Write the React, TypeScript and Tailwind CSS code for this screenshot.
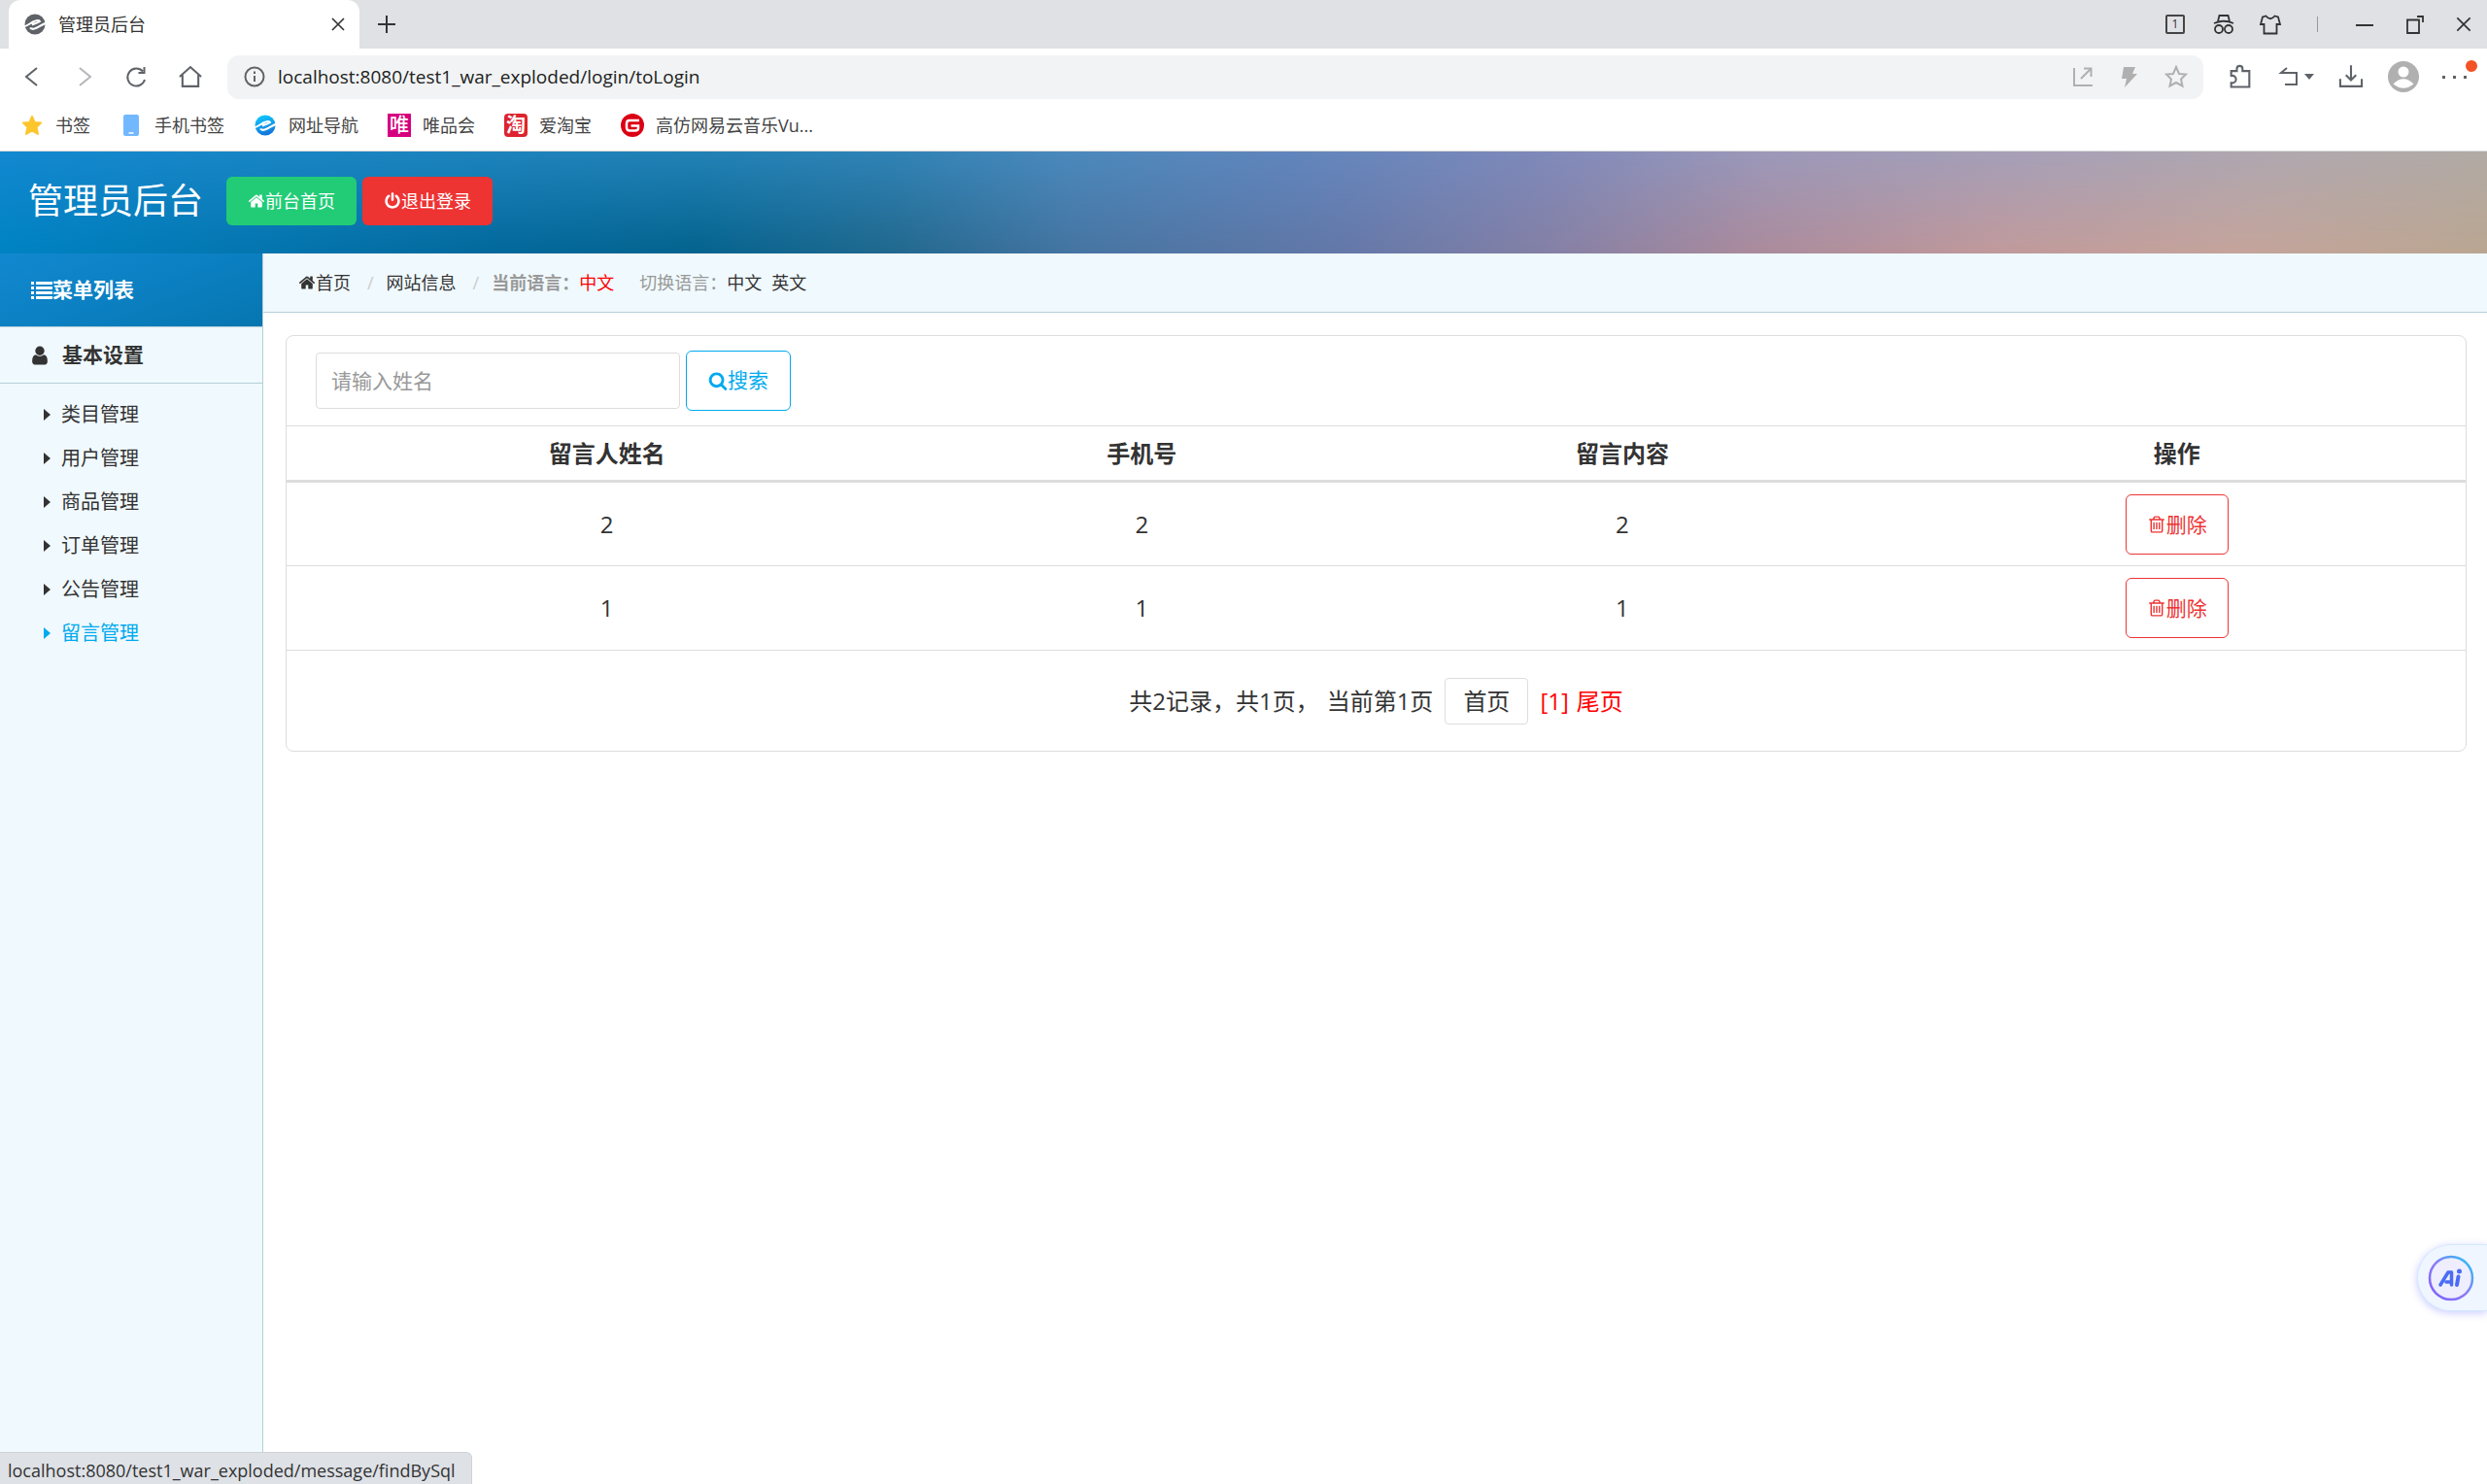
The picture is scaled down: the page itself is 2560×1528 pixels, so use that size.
import { useState } from "react";
import type { ReactNode } from "react";

const FA = {
  home: "M1472 992v480q0 26-19 45t-45 19h-384v-384h-256v384h-384q-26 0-45-19t-19-45v-480q0-1 .5-3t.5-3l575-474 575 474q1 2 1 6zm223-69l-62 74q-8 9-21 11h-3q-13 0-21-7l-692-577-692 577q-12 8-24 7-13-2-21-11l-62-74q-8-10-7-23.5t11-21.5l719-599q32-26 76-26t76 26l244 204v-195q0-14 9-23t23-9h192q14 0 23 9t9 23v408l219 182q10 8 11 21.5t-7 23.5z",
  power:
    "M1664 896q0 156-61 298t-164 245-245 164-298 61-298-61-245-164-164-245-61-298q0-182 80.5-343t226.5-270q43-32 95.5-25t83.5 50q32 42 24.5 94.5t-49.5 84.5q-98 74-151.5 181t-53.5 228q0 104 40.5 198.5t109.5 163.5 163.5 109.5 198.5 40.5 198.5-40.5 163.5-109.5 109.5-163.5 40.5-198.5q0-121-53.5-228t-151.5-181q-42-32-49.5-84.5t24.5-94.5q31-43 84-50t95 25q146 109 226.5 270t80.5 343zm-640-768v640q0 52-38 90t-90 38-90-38-38-90v-640q0-52 38-90t90-38 90 38 38 90z",
  search:
    "M1216 832q0-185-131.5-316.5t-316.5-131.5-316.5 131.5-131.5 316.5 131.5 316.5 316.5 131.5 316.5-131.5 131.5-316.5zm512 832q0 52-38 90t-90 38q-54 0-90-38l-343-342q-179 124-399 124-143 0-273.5-55.5t-225-150-150-225-55.5-273.5 55.5-273.5 150-225 225-150 273.5-55.5 273.5 55.5 225 150 150 225 55.5 273.5q0 220-124 399l343 343q37 37 37 90z",
  trash:
    "M704 736v576q0 14-9 23t-23 9h-64q-14 0-23-9t-9-23v-576q0-14 9-23t23-9h64q14 0 23 9t9 23zm256 0v576q0 14-9 23t-23 9h-64q-14 0-23-9t-9-23v-576q0-14 9-23t23-9h64q14 0 23 9t9 23zm256 0v576q0 14-9 23t-23 9h-64q-14 0-23-9t-9-23v-576q0-14 9-23t23-9h64q14 0 23 9t9 23zm128 724v-948h-896v948q0 22 7 40.5t14.5 27 10.5 8.5h832q3 0 10.5-8.5t14.5-27 7-40.5zm-672-1076h448l-48-117q-7-9-17-11h-317q-10 2-17 11zm928 32v64q0 14-9 23t-23 9h-96v948q0 83-47 143.5t-113 60.5h-832q-66 0-113-58.5t-47-141.5v-952h-96q-14 0-23-9t-9-23v-64q0-14 9-23t23-9h309l70-167q15-37 54-63t79-26h320q40 0 79 26t54 63l70 167h309q14 0 23 9t9 23z",
  user: "M1536 1399q0 109-62.5 187t-150.5 78h-854q-88 0-150.5-78t-62.5-187q0-85 8.5-160.5t31.5-152 58.5-131 94-89 134.5-34.5q131 128 313 128t313-128q76 0 134.5 34.5t94 89 58.5 131 31.5 152 8.5 160.5zm-256-887q0 159-112.5 271.5t-271.5 112.5-271.5-112.5-112.5-271.5 112.5-271.5 271.5-112.5 271.5 112.5 112.5 271.5z",
};

function FaIcon({ d, className, viewBox = "0 0 1792 1792" }: { d: string; className: string; viewBox?: string }) {
  return (
    <svg viewBox={viewBox} className={`shrink-0 ${className}`} fill="currentColor" aria-hidden="true">
      <path d={d} />
    </svg>
  );
}

function LineIcon({ children, className = "size-6" }: { children: ReactNode; className?: string }) {
  return (
    <svg viewBox="0 0 24 24" className={`shrink-0 ${className}`} fill="none" stroke="currentColor" strokeWidth="2" aria-hidden="true">
      {children}
    </svg>
  );
}

function BrowserLogo({ id, from, to }: { id: string; from: string; to: string }) {
  return (
    <svg viewBox="0 0 24 24" className="size-6 shrink-0" aria-hidden="true">
      <defs>
        <linearGradient id={id} x1="0" y1="0" x2="0.3" y2="1">
          <stop offset="0" stopColor={from} />
          <stop offset="1" stopColor={to} />
        </linearGradient>
      </defs>
      <circle cx="12" cy="12" r="10.5" fill={`url(#${id})`} />
      <path d="M0 14.5C4 14 7 11 10 9.5C13 8 16 7.5 17 9C15 10.500 12 11 9 12.500" fill="none" stroke="white" strokeWidth="2" />
      <path d="M24 10.500C20 11.500 17 14 14 15.500C11 17 8 17 7 15.500" fill="none" stroke="white" strokeWidth="2.2" />
    </svg>
  );
}

function TabStrip() {
  return (
    <div className="flex h-[50px] items-center bg-[#dfe1e5] pl-[9px] text-[#333]">
      <div className="flex h-full w-[361px] items-center rounded-t-xl bg-white pr-[14px] pl-[15px]">
        <BrowserLogo id="tab-logo" from="#5f6368" to="#5f6368" />
        <span className="ml-3 grow text-lg">管理员后台</span>
        <button aria-label="关闭标签页">
          <LineIcon className="size-4">
            <path d="M3 3L21 21M21 3L3 21" strokeWidth="2.500" />
          </LineIcon>
        </button>
      </div>
      <button aria-label="新标签页" className="ml-4">
        <LineIcon>
          <path d="M12 3V21M3 12H21" />
        </LineIcon>
      </button>
      <div className="ml-auto flex items-center pr-[14px]">
        <button aria-label="标签数" className="flex size-5 items-center justify-center rounded-xs border-2 border-[#444] text-xs">
          1
        </button>
        <button aria-label="无痕模式" className="ml-7">
          <LineIcon className="size-6">
            <path d="M2 11Q12 6.500 22 11M6 9L7.500 3H16.500L18 9" strokeWidth="1.800" />
            <circle cx="7" cy="17" r="4" strokeWidth="1.800" />
            <circle cx="17" cy="17" r="4" strokeWidth="1.800" />
          </LineIcon>
        </button>
        <button aria-label="皮肤" className="ml-6">
          <LineIcon className="size-6">
            <path d="M7.500 3.500Q12 9 16.500 3.500L20 4.500L22 12H18.500V21.500H5.500V12H2L4 4.500Z" strokeWidth="1.800" />
          </LineIcon>
        </button>
        <span className="mx-9 h-4 w-px bg-[#999]" />
        <button aria-label="最小化">
          <LineIcon>
            <path d="M3 13H21" />
          </LineIcon>
        </button>
        <button aria-label="还原" className="ml-7">
          <LineIcon>
            <path d="M4 7.500H16V21H4ZM14 4H20V10" strokeWidth="1.800" />
          </LineIcon>
        </button>
        <button aria-label="关闭" className="ml-7">
          <LineIcon className="size-5">
            <path d="M4 4L20 20M20 4L4 20" />
          </LineIcon>
        </button>
      </div>
    </div>
  );
}

function AddressBar() {
  return (
    <div className="flex h-[58px] items-center bg-white pr-[10px] pl-5 text-[#5f6368]">
      <button aria-label="后退">
        <LineIcon>
          <path d="M18 3L7 12L18 21" />
        </LineIcon>
      </button>
      <button aria-label="前进" className="ml-8 text-[#b4b6b9]">
        <LineIcon>
          <path d="M6 3L17 12L6 21" />
        </LineIcon>
      </button>
      <button aria-label="刷新" className="ml-7">
        <LineIcon>
          <path d="M21 15A9 9 0 1 1 19 6.500M20.500 2V8H14.500" />
        </LineIcon>
      </button>
      <button aria-label="主页" className="ml-[30px]">
        <LineIcon className="size-7">
          <path d="M2.500 12L12 3.500L21.500 12M5 10.500V20.500H19V10.500" strokeWidth="1.800" />
        </LineIcon>
      </button>
      <div className="ml-6 flex h-[45px] grow items-center rounded-xl bg-[#f1f3f4] px-4">
        <LineIcon>
          <circle cx="12" cy="12" r="9.500" />
          <path d="M12 11V17M12 6.500V9" />
        </LineIcon>
        <input
          aria-label="地址栏"
          defaultValue="localhost:8080/test1_war_exploded/login/toLogin"
          className="ml-3 grow bg-transparent text-[19px] text-[#222] outline-none"
        />
        <div className="flex items-center gap-6 text-[#b0b0b0]">
          <button aria-label="分享">
            <LineIcon>
              <path d="M3 3V21H22M10 14L20 4M13 3.500H20.500V12" />
            </LineIcon>
          </button>
          <button aria-label="极速模式">
            <LineIcon>
              <path d="M6 2H18L15 9H20L7 23L9 14H4Z" fill="currentColor" stroke="none" />
            </LineIcon>
          </button>
          <button aria-label="收藏">
            <LineIcon>
              <path d="M12 2L15 9L22 9.500L17 14.500L18.500 21.500L12 18L5.500 21.500L7 14.500L2 9.500L9 9Z" />
            </LineIcon>
          </button>
        </div>
      </div>
      <button aria-label="扩展" className="ml-6">
        <LineIcon className="size-7">
          <path d="M4 7H9V5A2.500 2.500 0 0 1 14 5V7H20V21H4V17.500H5A3 3 0 0 0 5 11H4Z" strokeWidth="1.800" />
        </LineIcon>
      </button>
      <button aria-label="恢复" className="ml-6 flex items-center">
        <LineIcon>
          <path d="M10 3L4 8H20V20H8" />
        </LineIcon>
        <span className="ml-1 border-x-5 border-t-6 border-x-transparent border-t-[#5f6368]" />
      </button>
      <button aria-label="下载" className="ml-6">
        <LineIcon className="size-7">
          <path d="M12 2V15M7.500 10.500L12 15L16.500 10.500M2.500 14V20.500H21.500V14" strokeWidth="1.800" />
        </LineIcon>
      </button>
      <button aria-label="账户" className="ml-6">
        <svg viewBox="0 0 32 32" className="size-8">
          <circle cx="16" cy="16" r="16" fill="#b0b0b0" />
          <circle cx="16" cy="11" r="5.500" fill="white" />
          <path d="M5.500 23.500Q16 13 26.500 23.500Q16 32 5.500 23.500Z" fill="white" />
        </svg>
      </button>
      <button aria-label="更多" className="relative ml-6 flex w-9 items-center gap-2 py-3">
        <span className="size-[3px] bg-[#5f6368]" />
        <span className="size-[3px] bg-[#5f6368]" />
        <span className="size-[3px] bg-[#5f6368]" />
        <span className="absolute -top-1 right-0 size-3 rounded-full bg-[#f35325]" />
      </button>
    </div>
  );
}

function Bookmark({ icon, label }: { icon: ReactNode; label: string }) {
  return (
    <a href="#" className="flex items-center gap-3">
      {icon}
      {label}
    </a>
  );
}

function Bookmarks() {
  return (
    <nav className="flex h-12 items-center gap-[30px] border-b border-[#dadada] bg-white pb-[6px] pl-[21px] text-lg text-[#444]">
      <Bookmark
        label="书签"
        icon={
          <svg viewBox="0 0 24 24" className="size-6">
            <path d="M12 3L14.500 9L21 9.500L16.500 14L18 21L12 17.500L6 21L7.500 14L3 9.500L9.500 9Z" fill="#fdc62d" stroke="#fdc62d" strokeWidth="2" strokeLinejoin="round" />
          </svg>
        }
      />
      <Bookmark
        label="手机书签"
        icon={
          <svg viewBox="0 0 24 24" className="size-6">
            <rect x="4" y="1" width="16" height="22" rx="2" fill="#72b8ff" />
            <path d="M9.500 20H14.500" stroke="white" strokeWidth="1.500" />
          </svg>
        }
      />
      <Bookmark label="网址导航" icon={<BrowserLogo id="nav-logo" from="#10d0ff" to="#1478dc" />} />
      <Bookmark
        label="唯品会"
        icon={<span className="flex size-6 items-center justify-center bg-[#d6007f] text-xl font-medium text-white">唯</span>}
      />
      <Bookmark
        label="爱淘宝"
        icon={<span className="flex size-6 items-center justify-center rounded-sm bg-[#dc2430] text-xl font-bold text-white">淘</span>}
      />
      <Bookmark
        label="高仿网易云音乐Vu..."
        icon={
          <svg viewBox="0 0 24 24" className="size-6">
            <circle cx="12" cy="12" r="12" fill="#dc0014" />
            <path d="M19 7H9Q6 7 6 10V14Q6 17.500 9 17.500H15Q18 17.500 18 15V12.500H10.500" fill="none" stroke="white" strokeWidth="2.500" />
          </svg>
        }
      />
    </nav>
  );
}

function Banner() {
  return (
    <header className="relative isolate flex h-[105px] items-center pb-[3px] pl-[29px] text-white">
      {/* upper tones, with the darker lower tones faded in over them */}
      <div className="absolute inset-0 -z-20 bg-[linear-gradient(90deg,#1288d0_0%,#1a84c0_14%,#2180b4_28%,#3082b4_36%,#4b88bb_43%,#6185bc_52%,#7f89b9_62%,#9d98b8_71%,#a8a0b6_82%,#b1a8ae_92%,#b2aaa4_100%)]" />
      <div className="absolute inset-0 -z-10 bg-[linear-gradient(90deg,#0083c3_0%,#0476b0_10%,#03699c_20%,#05648f_28%,#22698f_36%,#4575a2_43%,#6478a9_54%,#8380a6_62%,#a88a9d_70%,#bf999c_80%,#c4a49c_90%,#b9a692_100%)] mask-[linear-gradient(to_bottom,transparent_5%,black_95%)]" />
      <h1 className="text-4xl">管理员后台</h1>
      <button className="ml-6 flex h-[50px] items-center rounded-md bg-[#22cc77] px-[22px] text-lg">
        <FaIcon d={FA.home} className="size-[18px]" />
        前台首页
      </button>
      <button className="ml-[6px] flex h-[50px] items-center rounded-md bg-[#ee3333] px-[22px] text-lg">
        <FaIcon d={FA.power} className="size-[18px]" />
        退出登录
      </button>
    </header>
  );
}

const MENU = ["类目管理", "用户管理", "商品管理", "订单管理", "公告管理", "留言管理"];

function Sidebar() {
  const [active, setActive] = useState("留言管理");
  return (
    <aside className="w-[271px] shrink-0 border-r border-[#b5cfd9] bg-[#f0f9fd]">
      <div className="flex h-[76px] items-center border-b border-[#b5cfd9] bg-[linear-gradient(160deg,#1288d0_0%,#0b80c2_50%,#0676b0_100%)] pl-8 text-[21px] font-bold text-white">
        <FaIcon
          viewBox="0 0 22 18"
          d="M0 0H3V3H0ZM5 0H22V3H5ZM0 5H3V8H0ZM5 5H22V8H5ZM0 10H3V13H0ZM5 10H22V13H5ZM0 15H3V18H0ZM5 15H22V18H5Z"
          className="h-[18px] w-[22px]"
        />
        菜单列表
      </div>
      <h2 className="flex h-[58px] items-center border-b border-[#b5cfd9] pl-[30px] text-[21px] font-bold">
        <FaIcon d={FA.user} className="mr-3 size-[22px]" />
        基本设置
      </h2>
      <ul className="py-[9px]">
        {MENU.map((item) => (
          <li key={item}>
            <a
              href="#"
              onClick={() => setActive(item)}
              className={`flex h-[45px] items-center pl-[45px] text-xl ${item === active ? "text-[#00aaee]" : ""}`}
            >
              <FaIcon viewBox="0 0 7 12" d="M0 0L7 6L0 12Z" className="mr-[11px] h-3 w-[7px]" />
              {item}
            </a>
          </li>
        ))}
      </ul>
    </aside>
  );
}

function Breadcrumb() {
  return (
    <nav className="flex h-[61px] items-center border-b border-[#b5cfd9] bg-[#f0f9fd] pl-9 text-lg text-[#999]">
      <a href="#" className="flex items-center text-[#333]">
        <FaIcon d={FA.home} className="size-[18px]" />
        首页
      </a>
      <span className="mr-[13px] ml-[17px] text-[#ccc]">/</span>
      <a href="#" className="text-[#333]">网站信息</a>
      <span className="mr-[13px] ml-[17px] text-[#ccc]">/</span>
      <strong className="font-bold">当前语言：</strong>
      <span className="text-[#ff0000]">中文</span>
      <span className="ml-[26px]">切换语言：</span>
      <a href="#" className="text-[#333]">中文</a>
      <a href="#" className="ml-[10px] text-[#333]">英文</a>
    </nav>
  );
}

const ROWS = [
  { name: "2", phone: "2", content: "2" },
  { name: "1", phone: "1", content: "1" },
];

function MessagePanel() {
  return (
    <section className="mt-[23px] mr-[21px] ml-[23px] rounded-lg border border-[#ddd]">
      <form className="flex items-center gap-[6px] py-[15px] pl-[30px]" onSubmit={(e) => e.preventDefault()}>
        <input
          aria-label="姓名"
          placeholder="请输入姓名"
          className="h-[58px] w-[375px] rounded-sm border border-[#ddd] px-[15px] text-[21px] placeholder:text-[#999]"
        />
        <button className="flex h-[62px] items-center rounded-md border border-[#00aaee] px-[22px] text-[21px] text-[#00aaee]">
          <FaIcon d={FA.search} className="size-5" />
          搜索
        </button>
      </form>
      <table className="w-full table-fixed text-center text-2xl">
        <thead>
          <tr className="h-[57px] border-t border-b-3 border-[#ddd]">
            <th className="w-[29.4%]">留言人姓名</th>
            <th className="w-[19.7%]">手机号</th>
            <th className="w-[24.4%]">留言内容</th>
            <th>操作</th>
          </tr>
        </thead>
        <tbody>
          {ROWS.map((row) => (
            <tr key={row.name} className="h-[87px] border-b border-[#ddd]">
              <td>{row.name}</td>
              <td>{row.phone}</td>
              <td>{row.content}</td>
              <td>
                <button className="mx-auto flex h-[62px] items-center rounded-md border border-[#ee3333] px-[21px] text-[21px] text-[#ee3333]">
                  <FaIcon d={FA.trash} className="size-5" />
                  删除
                </button>
              </td>
            </tr>
          ))}
        </tbody>
      </table>
      <div className="flex h-[103px] items-center justify-center text-2xl">
        <span>共2记录，共1页，</span>
        <span className="ml-2">当前第1页</span>
        <a href="#" className="mx-3 flex h-12 items-center rounded-sm border border-[#ddd] px-[18px]">首页</a>
        <a href="#" className="text-[#ff0000]">[1]</a>
        <a href="#" className="ml-2 text-[#ff0000]">尾页</a>
      </div>
    </section>
  );
}

function AiButton() {
  return (
    <button
      aria-label="AI 助手"
      className="fixed right-0 bottom-[178px] flex h-[69px] w-[72px] items-center rounded-l-full border border-r-0 border-[#d5e8ff] bg-[#eff6ff] pl-[10px] shadow-[0_2px_8px_#c8ccff]"
    >
      <svg viewBox="0 0 48 48" className="size-12">
        <defs>
          <linearGradient id="ring" x1="0" y1="1" x2="1" y2="0">
            <stop offset="0" stopColor="#7a5cff" />
            <stop offset="0.500" stopColor="#8d7cf5" />
            <stop offset="1" stopColor="#1fc8f5" />
          </linearGradient>
        </defs>
        <circle cx="24" cy="24" r="22" fill="#eeeefe" stroke="url(#ring)" strokeWidth="2.500" />
        <path d="M13 31L21 18H24.500V31M19 28H22" fill="none" stroke="#4a6cf5" strokeWidth="3.500" strokeLinejoin="round" strokeLinecap="round" />
        <path d="M31.500 22.500L30 31" stroke="#4a6cf5" strokeWidth="4" strokeLinecap="round" />
        <circle cx="32.500" cy="17" r="2.500" fill="#4a6cf5" />
      </svg>
    </button>
  );
}

export default function App() {
  return (
    <div className="flex min-h-screen flex-col bg-white font-['Open_Sans','Noto_Sans_CJK_SC',sans-serif] text-[#333]">
      <TabStrip />
      <AddressBar />
      <Bookmarks />
      <Banner />
      <div className="flex grow">
        <Sidebar />
        <main className="grow">
          <Breadcrumb />
          <MessagePanel />
        </main>
      </div>
      <AiButton />
      <div className="fixed bottom-0 left-0 flex h-[33px] items-center rounded-tr-md border-t border-r border-[#d0d2d6] bg-[#dee1e6] pt-1 pr-4 pl-2 text-lg">
        localhost:8080/test1_war_exploded/message/findBySql
      </div>
    </div>
  );
}
